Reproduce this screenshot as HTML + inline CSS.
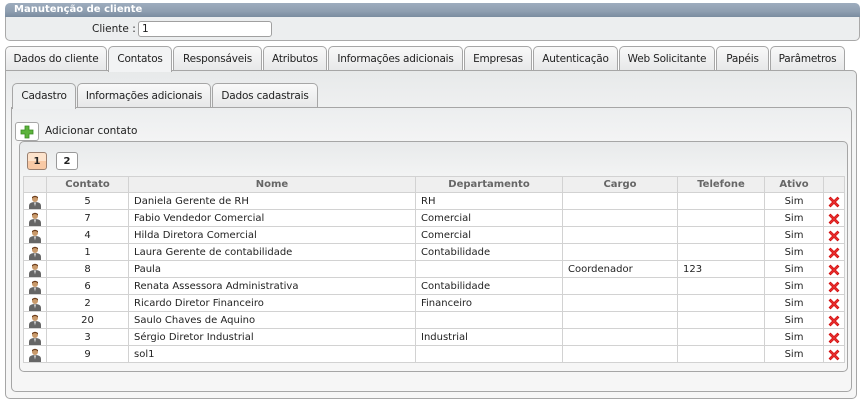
<!DOCTYPE html>
<html><head><meta charset="utf-8"><style>
*{box-sizing:border-box;margin:0;padding:0}
body{width:865px;height:402px;background:#fff;font-family:"DejaVu Sans","Liberation Sans",sans-serif;font-size:10.5px;color:#222;position:relative;overflow:hidden}
.abs{position:absolute}
.title{left:5px;top:3px;width:855px;height:14px;background:linear-gradient(#9eadbe,#8e9eb0 60%,#7a8c9f);border-radius:5px 5px 0 0;color:#fff;font-weight:bold;font-size:10px;padding:1px 0 0 9px;line-height:12px}
.cli{left:5px;top:17px;width:855px;height:24px;background:#eceeef;border:1px solid #a9a9a9;border-top:none;border-radius:0 0 5px 5px}
.tab{position:absolute;height:25px;border:1px solid #a6a6a6;border-bottom:none;border-radius:5px 5px 0 0;background:linear-gradient(#f9f9f9,#e6e7e8);text-align:center;line-height:24px;font-size:10.5px;letter-spacing:-0.2px;color:#222;white-space:nowrap}
.tab.act{background:#f2f3f4;height:26px;z-index:2}
.panel{border:1px solid #a6a6a6;border-radius:0 5px 5px 5px;background:linear-gradient(#e7e9ea,#f4f5f5 60px,#f6f6f6)}
table{border-collapse:collapse;position:absolute;left:23px;top:176px;width:821px;background:#fff;table-layout:fixed}
td,th{border:1px solid #d2d2d2;height:17px;line-height:15px;padding:0 5px;font-size:10px;white-space:nowrap;overflow:hidden}
th{background:#efefef;color:#666;font-weight:bold;height:16px;line-height:14px;text-align:center}
td.c{text-align:center}
.ic{padding:0;text-align:center}
.ic svg{display:block;margin:1px auto 0}
</style></head><body>
<div class="abs title">Manutenção de cliente</div>
<div class="abs cli"></div>
<div class="abs" style="left:92px;top:23px">Cliente :</div>
<div class="abs" style="left:138px;top:21px;width:134px;height:16px;border:1px solid #a0a0a0;border-radius:3px;background:#fff;padding-left:3px;line-height:14px">1</div>

<div class="tab" style="left:5px;top:46px;width:102px">Dados do cliente</div>
<div class="tab act" style="left:108px;top:46px;width:64px">Contatos</div>
<div class="tab" style="left:173px;top:46px;width:89px">Responsáveis</div>
<div class="tab" style="left:263px;top:46px;width:64px">Atributos</div>
<div class="tab" style="left:328px;top:46px;width:135px">Informações adicionais</div>
<div class="tab" style="left:464px;top:46px;width:68px">Empresas</div>
<div class="tab" style="left:533px;top:46px;width:85px">Autenticação</div>
<div class="tab" style="left:619px;top:46px;width:96px">Web Solicitante</div>
<div class="tab" style="left:716px;top:46px;width:53px">Papéis</div>
<div class="tab" style="left:770px;top:46px;width:75px">Parâmetros</div>
<div class="abs panel" style="left:5px;top:70px;width:852px;height:329px"></div>

<div class="tab act" style="left:12px;top:83px;width:64px;background:#eef0f1">Cadastro</div>
<div class="tab" style="left:77px;top:83px;width:134px">Informações adicionais</div>
<div class="tab" style="left:212px;top:83px;width:106px">Dados cadastrais</div>
<div class="abs panel" style="left:11px;top:107px;width:841px;height:285px;background:linear-gradient(#eceeef,#f5f5f5 40px,#f6f6f6)"></div>

<div class="abs" style="left:15px;top:122px;width:24px;height:19px;border:1px solid #a6a6a6;border-radius:3px;background:#fff"><svg width="22" height="17" viewBox="0 0 22 17"><path d="M9 3h4v4h4v4h-4v4h-4v-4h-4v-4h4z" fill="#5cb33c" stroke="#3a8a22" stroke-width="0.8"/></svg></div>
<div class="abs" style="left:45px;top:125px">Adicionar contato</div>
<div class="abs" style="left:19px;top:141px;width:829px;height:231px;border:1px solid #a6a6a6;border-radius:5px;background:linear-gradient(#e8eaeb,#f4f5f5 40px,#f6f6f6)"></div>
<div class="abs" style="left:27px;top:152px;width:20px;height:18px;border:1px solid #9a8070;border-radius:3px;background:linear-gradient(#fde3cc 50%,#f8c9a5 50%);font-size:10px;font-weight:bold;text-align:center;line-height:17px">1</div>
<div class="abs" style="left:56px;top:152px;width:22px;height:18px;border:1px solid #999;border-radius:3px;background:#fff;font-size:10px;font-weight:bold;text-align:center;line-height:17px">2</div>

<svg width="0" height="0" style="position:absolute"><defs>
<symbol id="u" viewBox="0 0 14 14"><circle cx="7" cy="4" r="3" fill="#c99a6b"/><path d="M4 3.5q3-3 6 0v-1.5q-3-2.5-6 0z" fill="#6b3d1c"/><path d="M1 14v-3q0-4 6-4t6 4v3z" fill="#666"/><path d="M6 7.5h2l-1 4z" fill="#ddd"/></symbol>
<symbol id="x" viewBox="0 0 14 14"><path d="M2 3.5l1.5-1.5 3.5 3.5 3.5-3.5 1.5 1.5-3.5 3.5 3.5 3.5-1.5 1.5-3.5-3.5-3.5 3.5-1.5-1.5 3.5-3.5z" fill="#e83030" stroke="#c00" stroke-width="0.6"/></symbol>
</defs></svg>

<table>
<colgroup><col style="width:23px"><col style="width:82px"><col style="width:287px"><col style="width:147px"><col style="width:115px"><col style="width:87px"><col style="width:59px"><col style="width:21px"></colgroup>
<tr><th></th><th>Contato</th><th>Nome</th><th>Departamento</th><th>Cargo</th><th>Telefone</th><th>Ativo</th><th></th></tr>
<tr><td class="ic"><svg width="14" height="14"><use href="#u"/></svg></td><td class="c">5</td><td>Daniela Gerente de RH</td><td>RH</td><td></td><td></td><td class="c">Sim</td><td class="ic"><svg width="14" height="14"><use href="#x"/></svg></td></tr>
<tr><td class="ic"><svg width="14" height="14"><use href="#u"/></svg></td><td class="c">7</td><td>Fabio Vendedor Comercial</td><td>Comercial</td><td></td><td></td><td class="c">Sim</td><td class="ic"><svg width="14" height="14"><use href="#x"/></svg></td></tr>
<tr><td class="ic"><svg width="14" height="14"><use href="#u"/></svg></td><td class="c">4</td><td>Hilda Diretora Comercial</td><td>Comercial</td><td></td><td></td><td class="c">Sim</td><td class="ic"><svg width="14" height="14"><use href="#x"/></svg></td></tr>
<tr><td class="ic"><svg width="14" height="14"><use href="#u"/></svg></td><td class="c">1</td><td>Laura Gerente de contabilidade</td><td>Contabilidade</td><td></td><td></td><td class="c">Sim</td><td class="ic"><svg width="14" height="14"><use href="#x"/></svg></td></tr>
<tr><td class="ic"><svg width="14" height="14"><use href="#u"/></svg></td><td class="c">8</td><td>Paula</td><td></td><td>Coordenador</td><td>123</td><td class="c">Sim</td><td class="ic"><svg width="14" height="14"><use href="#x"/></svg></td></tr>
<tr><td class="ic"><svg width="14" height="14"><use href="#u"/></svg></td><td class="c">6</td><td>Renata Assessora Administrativa</td><td>Contabilidade</td><td></td><td></td><td class="c">Sim</td><td class="ic"><svg width="14" height="14"><use href="#x"/></svg></td></tr>
<tr><td class="ic"><svg width="14" height="14"><use href="#u"/></svg></td><td class="c">2</td><td>Ricardo Diretor Financeiro</td><td>Financeiro</td><td></td><td></td><td class="c">Sim</td><td class="ic"><svg width="14" height="14"><use href="#x"/></svg></td></tr>
<tr><td class="ic"><svg width="14" height="14"><use href="#u"/></svg></td><td class="c">20</td><td>Saulo Chaves de Aquino</td><td></td><td></td><td></td><td class="c">Sim</td><td class="ic"><svg width="14" height="14"><use href="#x"/></svg></td></tr>
<tr><td class="ic"><svg width="14" height="14"><use href="#u"/></svg></td><td class="c">3</td><td>Sérgio Diretor Industrial</td><td>Industrial</td><td></td><td></td><td class="c">Sim</td><td class="ic"><svg width="14" height="14"><use href="#x"/></svg></td></tr>
<tr><td class="ic"><svg width="14" height="14"><use href="#u"/></svg></td><td class="c">9</td><td>sol1</td><td></td><td></td><td></td><td class="c">Sim</td><td class="ic"><svg width="14" height="14"><use href="#x"/></svg></td></tr>
</table>
</body></html>
